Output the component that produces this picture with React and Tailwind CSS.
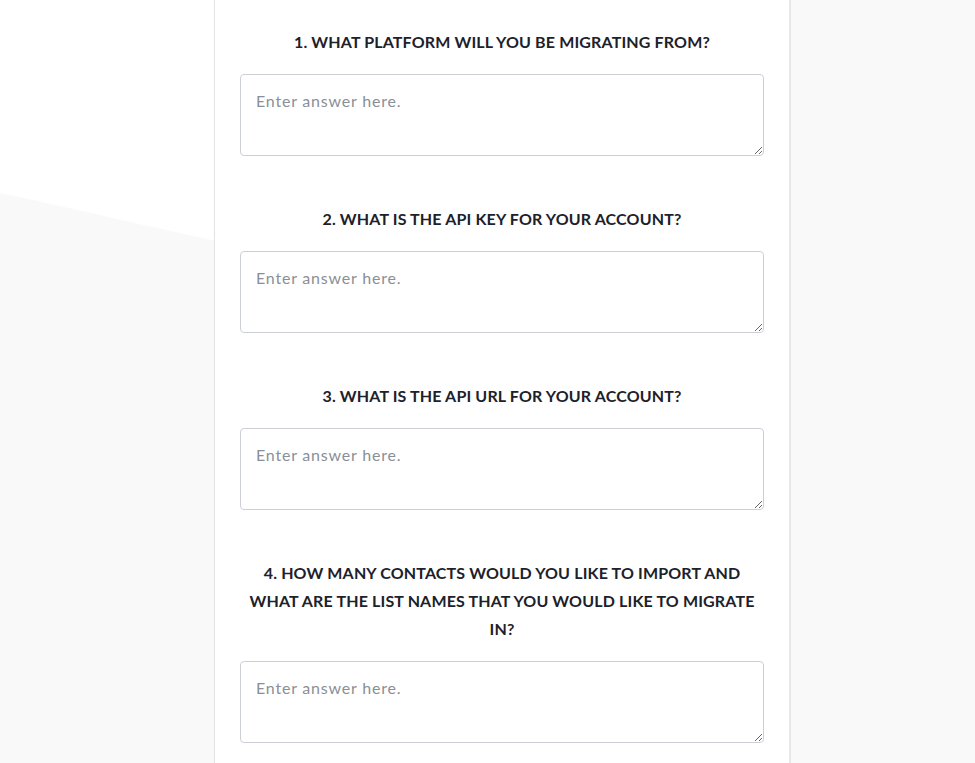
const questions = [
  "1. What platform will you be migrating from?",
  "2. What is the API key for your account?",
  "3. What is the API URL for your account?",
  "4. How many contacts would you like to import and what are the list names that you would like to migrate in?",
];

export default function App() {
  return (
    <div className="relative min-h-screen bg-[#f9f9f9] font-['Lato','Liberation_Sans',sans-serif]">
      {/* background wave */}
      <svg
        className="absolute left-0 top-0 h-[260px] w-[260px]"
        viewBox="0 0 260 260"
        preserveAspectRatio="none"
      >
        <path d="M0 0 H260 V250 C170 232 90 212 0 193 Z" fill="#ffffff" />
      </svg>

      <div className="relative ml-[214px] w-[577px] border-l border-[#e3e3e3] border-r-2 border-r-[#e8e8e8] bg-white px-[25px] pt-[28px] pb-[40px]">
        {questions.map((q) => (
          <div key={q} className="mb-[49px]">
            <h2 className="mb-[18px] text-center text-[16px] font-bold uppercase leading-[28px] tracking-[0.15px] text-[#1d2129]">
              {q}
            </h2>
            <textarea
              placeholder="Enter answer here."
              className="block h-[82px] w-full rounded-[4px] border border-[#ccd0d6] bg-white px-[15px] pt-[15px] text-[16px] leading-[22px] tracking-[0.8px] text-[#333] placeholder:text-[#8a8f97] outline-none"
            />
          </div>
        ))}
      </div>
    </div>
  );
}
